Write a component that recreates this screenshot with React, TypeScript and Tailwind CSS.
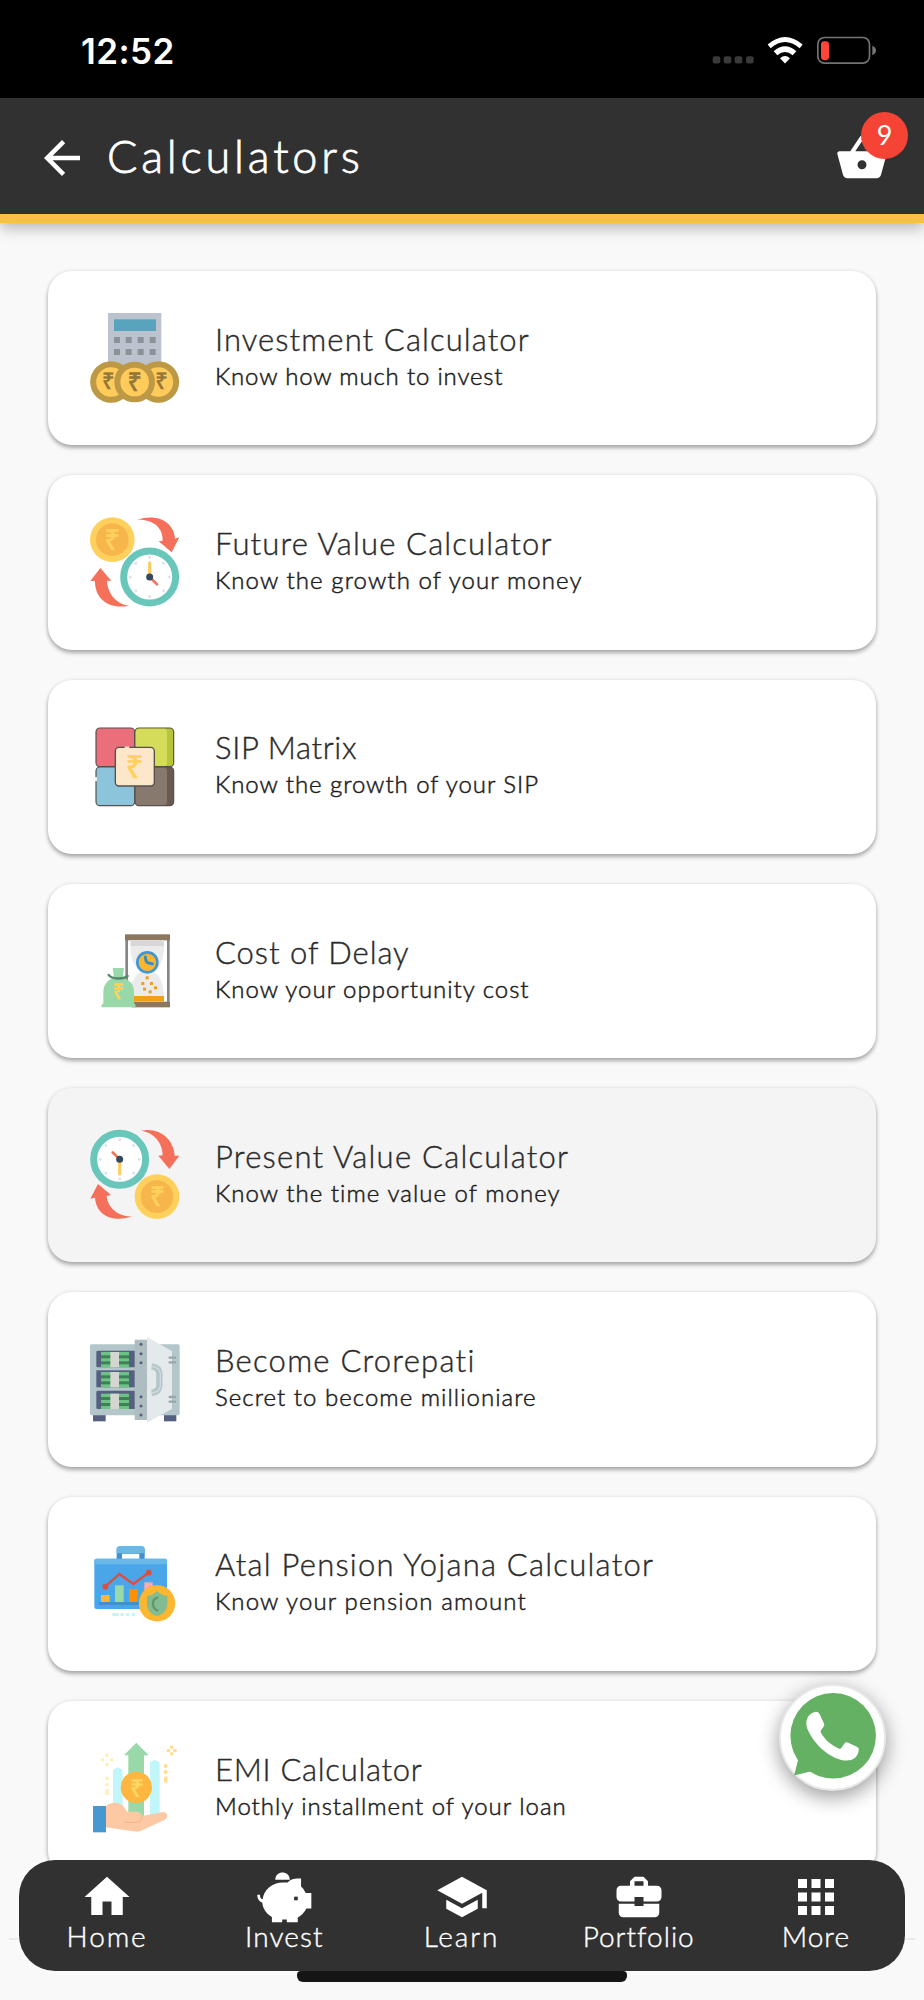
import type { ReactNode } from 'react';
import { MdApps, MdArrowBack, MdBusinessCenter, MdHome, MdSchool, MdShoppingBasket } from 'react-icons/md';

type Calculator = {
  title: string;
  subtitle: string;
  titleClass: string;
  subtitleClass: string;
  icon: ReactNode;
  pressed?: boolean;
};

function Rupee({ x, y, size, fill }: { x: number; y: number; size: number; fill: string }) {
  return (
    <text
      x={x}
      y={y}
      fontSize={size}
      fill={fill}
      stroke={fill}
      strokeWidth="2"
      textAnchor="middle"
      fontFamily="'Noto Sans', 'DejaVu Sans', sans-serif"
    >
      ₹
    </text>
  );
}

function IconFrame({ top, children }: { top: number; children: ReactNode }) {
  return (
    <svg viewBox={`150 ${top} 270 270`} className="size-[90px] shrink-0 overflow-visible">
      {children}
    </svg>
  );
}

function InvestmentIcon() {
  return (
    <IconFrame top={159}>
      <rect x="204" y="159" width="160" height="170" fill="#bcc3ce" />
      <rect x="222" y="178" width="126" height="35" fill="#57a4bc" />
      {[231, 267].map((y) =>
        [222, 257, 293, 329].map((x) => (
          <rect key={`${x}-${y}`} x={x} y={y} width="18" height="18" fill="#8d9299" />
        )),
      )}
      {[213, 355].map((x) => (
        <circle key={x} cx={x} cy="366" r="53.5" fill="#ffcb5b" stroke="#be9945" strokeWidth="18" />
      ))}
      <Rupee x={205} y={387} size={66} fill="#937638" />
      <Rupee x={365} y={387} size={66} fill="#937638" />
      <circle cx="284" cy="366" r="52" fill="#ffcb5b" stroke="#be9945" strokeWidth="18" />
      <Rupee x={284} y={392} size={76} fill="#937638" />
    </IconFrame>
  );
}

function ClockFace({ cx, cy }: { cx: number; cy: number }) {
  return (
    <>
      <circle cx={cx} cy={cy} r="78" fill="#ffffff" stroke="#68c6bb" strokeWidth="21" />
      {[0, 45, 90, 135, 180, 225, 270, 315].map((deg) => (
        <circle key={deg} cx={cx} cy={cy - 58.5} r="4.5" fill="#dfe2e6" transform={`rotate(${deg} ${cx} ${cy})`} />
      ))}
    </>
  );
}

function FutureValueIcon() {
  return (
    <IconFrame top={142}>
      <circle cx="217" cy="210" r="67" fill="#ffd15c" />
      <circle cx="217" cy="210" r="49" fill="#f7b64c" />
      <Rupee x={217} y={241} size={84} fill="#ffd15c" />
      <path d="M290 151 C350 129 403 157 405 207 L418 203 L395 248 L356 215 L368 213 C370 174 337 147 290 151Z" fill="#f4705b" />
      <path d="M181 295 L214 333 L201 333 C202 371 229 403 267 408 C207 421 164 387 165 334 L151 334Z" fill="#f4705b" />
      <ClockFace cx={329} cy={322} />
      <path d="M329 322 V279" stroke="#ffcb5b" strokeWidth="9" strokeLinecap="round" />
      <path d="M329 322 L351 344" stroke="#f4705b" strokeWidth="8" strokeLinecap="round" />
      <circle cx="329" cy="322" r="10.5" fill="#34495e" />
    </IconFrame>
  );
}

function MatrixIcon() {
  return (
    <IconFrame top={125}>
      <g strokeWidth="3.5" stroke="#55504c">
        <rect x="168" y="143" width="116" height="116" rx="12" fill="#eb6e7b" />
        <rect x="285" y="143" width="116" height="116" rx="12" fill="#b8c439" />
        <rect x="168" y="260" width="116" height="116" rx="12" fill="#8cc4dc" />
        <rect x="285" y="260" width="116" height="116" rx="12" fill="#685a50" />
      </g>
      <path d="M298 145 H372 Q381 145 381 156 V247 Q381 257 372 257 H298 Q287 257 287 247 V156 Q287 145 298 145Z" fill="#d5dc5a" />
      <path d="M298 262 H372 Q381 262 381 273 V364 Q381 374 372 374 H298 Q287 374 287 364 V273 Q287 262 298 262Z" fill="#88796f" />
      <rect x="226" y="201" width="117" height="116" rx="11" fill="#fce7ca" stroke="#55504c" strokeWidth="4" />
      <path d="M254 201 H268" stroke="#fce7ca" strokeWidth="5" />
      <path d="M168 290 V303" stroke="#ffffff" strokeWidth="5" />
      <Rupee x={284} y={292} size={96} fill="#ffd15c" />
    </IconFrame>
  );
}

function DelayIcon() {
  return (
    <IconFrame top={138}>
      <rect x="256" y="176" width="8" height="195" fill="#858585" />
      <rect x="381" y="176" width="8" height="195" fill="#858585" />
      <rect x="255" y="163" width="135" height="18" fill="#8e775f" />
      <rect x="275" y="365" width="115" height="17" fill="#8e775f" />
      <path d="M272 181 H372 V200 C372 240 355 268 342 277 C361 287 372 315 372 348 V365 H272 V330 C274 303 287 284 302 277 C285 262 272 240 272 200Z" fill="#ebebeb" />
      <rect x="272" y="181" width="100" height="17" fill="#d7d7d9" />
      <rect x="272" y="348" width="100" height="17" fill="#f29f18" />
      {[[317, 289], [304, 306], [330, 306], [309, 323], [342, 319], [326, 331]].map(([x, y]) => (
        <rect key={`${x}-${y}`} x={x} y={y} width="9" height="9" fill="#f29f18" />
      ))}
      <circle cx="322" cy="247" r="30" fill="#fdb62f" stroke="#3f98d3" strokeWidth="8" />
      <path d="M316 231 C317 245 320 251 337 251" stroke="#3c8bc0" strokeWidth="9" fill="none" strokeLinecap="round" />
      <path d="M218 264 H252 L248 293 C272 300 282 314 282 336 V369 Q288 372 287 382 H184 Q183 373 190 370 V336 C190 314 202 299 222 293Z" fill="#99d9a9" />
      <path d="M206 285 C216 298 249 299 263 288" stroke="#57886e" strokeWidth="7" fill="none" strokeLinecap="round" />
      <Rupee x={235} y={358} size={60} fill="#ffd15c" />
    </IconFrame>
  );
}

function PresentValueIcon() {
  return (
    <IconFrame top={151}>
      <ClockFace cx={239} cy={239} />
      <path d="M239 239 V283" stroke="#ffcb5b" strokeWidth="9" strokeLinecap="round" />
      <path d="M239 239 L218 218" stroke="#f4705b" strokeWidth="8" strokeLinecap="round" />
      <circle cx="239" cy="239" r="10.5" fill="#34495e" />
      <path d="M302 153 C361 141 402 181 404 228 L418 228 L388 268 L355 228 L368 227 C368 188 340 157 302 153Z" fill="#f4705b" />
      <path d="M174 313 L213 346 L200 349 C203 386 238 413 278 410 C220 430 169 408 165 354 L151 357Z" fill="#f4705b" />
      <circle cx="351" cy="351" r="67" fill="#ffd15c" />
      <circle cx="351" cy="351" r="49" fill="#f7b64c" />
      <Rupee x={352} y={380} size={80} fill="#ffd15c" />
    </IconFrame>
  );
}

function SafeIcon() {
  return (
    <IconFrame top={134}>
      <rect x="159" y="368" width="38" height="25" fill="#556080" />
      <rect x="372" y="368" width="37" height="25" fill="#556080" />
      <rect x="150" y="162" width="269" height="213" rx="5" fill="#b3c6ca" />
      {[181, 240, 301].map((y, i) => {
        const h = i === 0 ? 50 : i === 1 ? 51 : 55;
        return (
          <g key={y}>
            <rect x="169" y={y} width="120" height={h} rx={i === 1 ? 0 : 4} fill="#556080" />
            <rect x="183" y={y + h - 46} width="84" height="46" fill="#6dc285" />
            <rect x="183" y={y + h - 36} width="84" height="9" fill="#3f8055" />
            <rect x="183" y={y + h - 18} width="84" height="9" fill="#3f8055" />
            <rect x="211" y={y + h - 46} width="26" height="46" fill="#d3d6d1" />
          </g>
        );
      })}
      <rect x="284" y="148" width="38" height="241" fill="#aebdc0" />
      {[162, 190, 217, 319, 347, 374].map((y) => (
        <circle key={y} cx="303" cy={y} r="4.5" fill="#556080" />
      ))}
      <path d="M321 140 L396 182 V356 L321 397Z" fill="#e4e9ec" />
      <path d="M335 228 Q358 231 358 251 V285 Q358 305 335 308" stroke="#b3c6ca" strokeWidth="19" fill="none" />
      <path d="M335 228 Q361 231 361 251 V285 Q361 305 335 308" stroke="#d0dadd" strokeWidth="4" fill="none" />
      {[202, 216, 320, 334].map((y) => (
        <path key={y} d={`M389 ${y} H405`} stroke="#91a9ad" strokeWidth="7" strokeLinecap="round" />
      ))}
    </IconFrame>
  );
}

function PensionIcon() {
  return (
    <IconFrame top={147}>
      <path d="M238 208 V183 H306 V208" stroke="#428fcd" strokeWidth="16" fill="none" />
      <path d="M230 190 V178 Q230 168 240 168 H304 Q314 168 314 178 V190Z" fill="#68b8e8" />
      <rect x="163" y="206" width="218" height="151" rx="6" fill="#4ba6e9" />
      <path d="M163 223 V212 Q163 206 169 206 H375 Q381 206 381 212 V223Z" fill="#68b8e8" />
      <rect x="176" y="336" width="150" height="9" rx="4" fill="#428fcd" />
      <rect x="183" y="315" width="26" height="21" fill="#fdb62f" />
      <rect x="225" y="286" width="26" height="50" fill="#99d9a9" />
      <rect x="268" y="298" width="25" height="38" fill="#ff9100" />
      <rect x="313" y="277" width="25" height="45" fill="#ffa8ae" />
      <path d="M196 290 L238 252 L280 282 L326 248" stroke="#dd4e3c" strokeWidth="7" fill="none" />
      <circle cx="196" cy="290" r="8.5" fill="#dd4e3c" />
      <circle cx="326" cy="248" r="8.5" fill="#dd4e3c" />
      <circle cx="351" cy="340" r="54.5" fill="#fdb62f" />
      <path d="M351 303 Q365 317 382 318 V341 C382 360 368 374 351 378 C334 374 321 360 321 341 V318 Q338 317 351 303Z" fill="#83bc91" />
      <path d="M352 323 C335 328 334 353 352 361" stroke="#63966e" strokeWidth="7" fill="none" strokeLinecap="round" />
      <rect x="216" y="369" width="20" height="9" rx="3" fill="#bff6fc" />
      {[241, 258, 275].map((x) => (
        <rect key={x} x={x} y="369" width="10" height="9" rx="3" fill="#bff6fc" />
      ))}
    </IconFrame>
  );
}

function EmiIcon() {
  return (
    <IconFrame top={160}>
      <path d="M219 355 V241 L233 233 L248 241 V380 H219Z" fill="#c1f6fa" />
      <path d="M330 380 V218 L344 210 L359 218 V375Z" fill="#c1f6fa" />
      <path d="M265 385 V197 H252 L289 159 L326 197 H312 V385Z" fill="#99d9a9" />
      <circle cx="289" cy="293" r="47" fill="#fdb640" />
      <Rupee x={291} y={321} size={74} fill="#ffd764" />
      <path d="M197 350 C218 330 250 338 261 366 H290 Q303 367 306 379 L369 367 C384 367 386 385 373 391 L301 424 Q294 428 280 425 L197 413Z" fill="#fdc9a4" />
      <path d="M252 398 H290 Q306 397 306 379" stroke="#f6b78e" strokeWidth="4" fill="none" />
      <rect x="159" y="349" width="39" height="79" fill="#4798d0" />
      <g fill="#ffefbd">
        <rect x="196" y="192" width="10" height="9" />
        <rect x="182" y="206" width="10" height="9" />
        <rect x="210" y="206" width="10" height="9" />
        <rect x="196" y="220" width="10" height="9" />
        <rect x="196" y="261" width="10" height="10" />
        <rect x="196" y="280" width="10" height="9" />
        <rect x="196" y="298" width="10" height="18" />
      </g>
      <g fill="#ffdc91">
        <rect x="390" y="168" width="10" height="9" />
        <rect x="380" y="178" width="10" height="9" />
        <rect x="400" y="178" width="10" height="9" />
        <rect x="390" y="188" width="10" height="9" />
        <rect x="372" y="224" width="10" height="10" />
        <rect x="372" y="242" width="10" height="10" />
        <rect x="372" y="261" width="10" height="18" />
      </g>
    </IconFrame>
  );
}

const calculators: Calculator[] = [
  {
    title: 'Investment Calculator',
    subtitle: 'Know how much to invest',
    titleClass: 'tracking-[1.1px]',
    subtitleClass: 'tracking-[0.82px]',
    icon: <InvestmentIcon />,
  },
  {
    title: 'Future Value Calculator',
    subtitle: 'Know the growth of your money',
    titleClass: 'tracking-[1.15px]',
    subtitleClass: 'tracking-[1.09px]',
    icon: <FutureValueIcon />,
  },
  {
    title: 'SIP Matrix',
    subtitle: 'Know the growth of your SIP',
    titleClass: 'tracking-[0.65px]',
    subtitleClass: 'tracking-[0.94px]',
    icon: <MatrixIcon />,
  },
  {
    title: 'Cost of Delay',
    subtitle: 'Know your opportunity cost',
    titleClass: 'tracking-[0.95px]',
    subtitleClass: 'tracking-[0.98px]',
    icon: <DelayIcon />,
  },
  {
    title: 'Present Value Calculator',
    subtitle: 'Know the time value of money',
    titleClass: 'tracking-[1.24px]',
    subtitleClass: 'tracking-[1.04px]',
    icon: <PresentValueIcon />,
    pressed: true,
  },
  {
    title: 'Become Crorepati',
    subtitle: 'Secret to become millioniare',
    titleClass: 'tracking-[1.25px]',
    subtitleClass: 'tracking-[1.03px]',
    icon: <SafeIcon />,
  },
  {
    title: 'Atal Pension Yojana Calculator',
    subtitle: 'Know your pension amount',
    titleClass: 'tracking-[1.24px]',
    subtitleClass: 'tracking-[1.13px]',
    icon: <PensionIcon />,
  },
  {
    title: 'EMI Calculator',
    subtitle: 'Mothly installment of your loan',
    titleClass: 'tracking-[0.7px]',
    subtitleClass: 'tracking-[0.98px]',
    icon: <EmiIcon />,
  },
];

function PiggyIcon() {
  return (
    <svg viewBox="765 90 172 162" className="h-[54px] w-[57px]" fill="#ffffff">
      <path d="M823 119 C824 90 866 90 867 119Z" />
      <path d="M861 127 C868 118 879 114 901 115 V139 Q911 147 915 159 H932 V206 H917 Q908 224 891 233 V247 H858 V239 H844 V247 H813 V231 C794 219 786 206 784 188 C773 183 769 176 769 164 H777 C777 172 779 176 785 178 C788 149 815 127 846 127Z" />
      <rect x="880" y="170" width="11" height="11" fill="#313131" />
    </svg>
  );
}

const navItems = [
  { label: 'Home', icon: <MdHome />, labelClass: 'tracking-[1.9px]' },
  { label: 'Invest', icon: <PiggyIcon />, labelClass: 'tracking-[1.1px]' },
  { label: 'Learn', icon: <MdSchool />, labelClass: 'tracking-[1.9px]' },
  { label: 'Portfolio', icon: <MdBusinessCenter />, labelClass: 'tracking-[1px]' },
  { label: 'More', icon: <MdApps />, labelClass: 'tracking-[1px]' },
];

function StatusBar() {
  return (
    <div className="flex h-[98px] items-center justify-between bg-black pr-[47px] pl-[81px] text-white">
      <span className="mt-[4px] font-['Inter',sans-serif] text-[35px] leading-none font-semibold tracking-[0.4px]">12:52</span>
      <svg viewBox="750 105 495 92" className="mt-[3px] h-[31px] w-[165px]">
        {[752, 785, 818, 852].map((x) => (
          <rect key={x} x={x} y="168" width="23" height="22" rx="7" fill="#3a3a3a" />
        ))}
        <path d="M917 133 Q969 88 1022 133 L1013 144 Q969 107 926 144Z" fill="#fff" />
        <path d="M935 153 Q969 124 1003 153 L992 165 Q969 146 946 165Z" fill="#fff" />
        <path d="M954 174 Q969 161 984 174 L969 190Z" fill="#fff" />
        <rect x="1067.500" y="112" width="155" height="77" rx="20" fill="none" stroke="#747474" strokeWidth="5" />
        <rect x="1077" y="123" width="24" height="57" rx="10" fill="#ff453a" />
        <path d="M1231 137 Q1242 142 1242 151 Q1242 161 1231 165Z" fill="#747474" />
      </svg>
    </div>
  );
}

function Header() {
  return (
    <header className="relative z-10 flex h-[125px] items-center border-b-[9px] border-[#f9c042] bg-[#313131] pr-[35px] pl-[35px] text-white shadow-[0_5px_14px_rgba(0,0,0,0.28)]">
      <MdArrowBack className="mt-[4px] size-[54px]" />
      <h1 className="-mt-[1px] ml-[18px] text-[45px] leading-[54px] font-light tracking-[3.8px] [-webkit-text-stroke:0.8px_#fff]">
        Calculators
      </h1>
      <div className="relative mt-[4px] ml-auto">
        <MdShoppingBasket className="size-[54px]" />
        <span className="absolute -top-[19px] -right-[19px] flex size-[47px] items-center justify-center rounded-full bg-[#f54336] text-[27px]">
          9
        </span>
      </div>
    </header>
  );
}

function CalculatorCard({ calc }: { calc: Calculator }) {
  return (
    <button
      type="button"
      className={`flex h-[174.300px] shrink-0 items-center rounded-[24px] pl-[42px] text-left shadow-[0_3px_4px_rgba(0,0,0,0.3),0_0_4px_rgba(0,0,0,0.1)] ${
        calc.pressed ? 'bg-[#f4f4f4]' : 'bg-white'
      }`}
    >
      {calc.icon}
      <span className="ml-[35px] flex flex-col pb-[6px] whitespace-nowrap text-[#2a2a2a] [-webkit-text-stroke:0.4px_#2a2a2a]">
        <span className={`text-[31px] leading-[40px] font-light ${calc.titleClass}`}>{calc.title}</span>
        <span
          className={`text-[24px] leading-[33px] font-light text-[#1c1c1c] [-webkit-text-stroke:0.5px_#1c1c1c] ${calc.subtitleClass}`}
        >
          {calc.subtitle}
        </span>
      </span>
    </button>
  );
}

function WhatsAppButton() {
  return (
    <button
      type="button"
      aria-label="WhatsApp"
      className="absolute top-[1684px] left-[779px] size-[107px] rounded-full border-2 border-[#e8e8e8] bg-white shadow-[0_6px_20px_rgba(0,0,0,0.4)]"
    >
      <svg viewBox="960 82 306 306" className="size-full overflow-visible">
        <circle cx="1115" cy="230" r="127" fill="#65b163" />
        <path d="M992 262 L1011 300 L999 348 L1047 336 L1080 352Z" fill="#65b163" />
        <path
          d="M1058 160 Q1069 156 1075 166 L1088 194 Q1090 199 1086 204 L1079 213 Q1076 218 1079 222 C1091 242 1108 257 1131 268 Q1136 270 1139 266 L1149 252 Q1153 248 1158 250 L1188 264 Q1192 267 1191 273 C1188 296 1170 306 1148 303 C1101 296 1056 252 1038 208 C1031 188 1038 166 1058 160Z"
          fill="#ffffff"
        />
      </svg>
    </button>
  );
}

function BottomNav() {
  return (
    <>
      <div className="absolute top-[1938px] right-[9px] left-[9px] h-[2px] bg-[#e9e9e9]" />
      <nav className="absolute top-[1860px] right-[19px] left-[19px] flex h-[111px] rounded-[36px] bg-[#313131] text-white shadow-[0_0_14px_rgba(255,255,255,0.5)]">
        {navItems.map((item) => (
          <a key={item.label} className="flex flex-1 flex-col items-center pt-[10px] pr-[1px]">
            <span className="flex h-[54px] items-center text-[54px]">{item.icon}</span>
            <span
              className={`-mt-[5px] text-[28px] leading-[34px] font-light [-webkit-text-stroke:0.4px_#fff] ${item.labelClass}`}
            >
              {item.label}
            </span>
          </a>
        ))}
      </nav>
      <div className="absolute top-[1971px] left-[297px] h-[11px] w-[330px] rounded-b-[6px] rounded-tl-[4px] rounded-tr-[4px] bg-[#151515]" />
    </>
  );
}

export default function App() {
  return (
    <div className="relative h-[2000px] w-[924px] overflow-hidden bg-[#f9f9f9] font-['Lato',sans-serif]">
      <StatusBar />
      <Header />
      <main className="flex flex-col gap-[30px] px-[48px] pt-[48px]">
        {calculators.map((calc) => (
          <CalculatorCard key={calc.title} calc={calc} />
        ))}
      </main>
      <WhatsAppButton />
      <BottomNav />
    </div>
  );
}
